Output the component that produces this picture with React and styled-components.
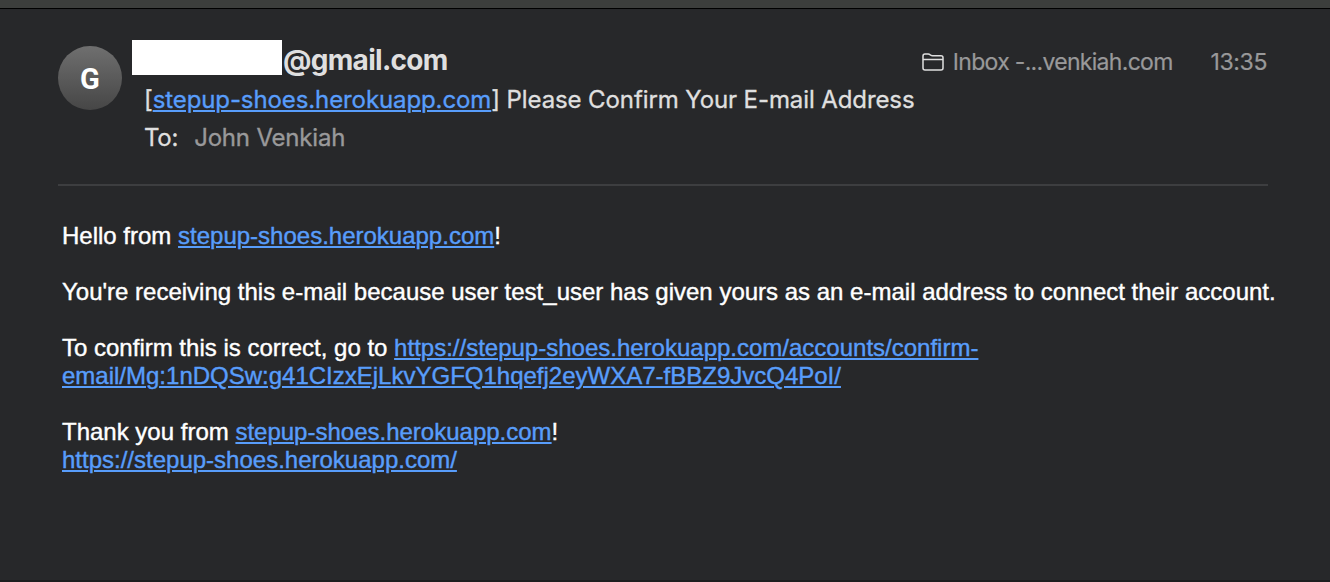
import React from 'react';
import styled, { createGlobalStyle } from 'styled-components';

const Global = createGlobalStyle`
  * { box-sizing: border-box; }
  body { margin: 0; background: #27282a; }
`;

const Window = styled.main`
  width: 1330px;
  height: 582px;
  overflow: hidden;
  background: #27282a;
  border-bottom: 2px solid #1d1e1f;
`;

const Toolbar = styled.div`
  height: 9px;
  background: #3c3e3c;
  border-bottom: 1px solid #000;
`;

const Header = styled.header`
  display: flex;
  margin: 0 62px 0 58px;
  padding-top: 31px;
  height: 177px;
  border-bottom: 2px solid #3d3e40;
  font-family: Inter, sans-serif;
`;

const Avatar = styled.div`
  flex: none;
  display: grid;
  place-items: center;
  width: 64px;
  height: 64px;
  margin-top: 6px;
  padding-top: 1px;
  border-radius: 50%;
  background: linear-gradient(#6f6f6f, #464646);
  color: #fff;
  font: 700 29px Roboto, sans-serif;
`;

const Details = styled.div`
  flex: 1;
  margin-left: 10px;
`;

const SenderRow = styled.div`
  display: flex;
  height: 42px;
`;

const Redaction = styled.div`
  width: 150px;
  height: 35px;
  background: #fff;
`;

const Tracked = styled.span`
  white-space: pre;
  letter-spacing: ${(p) => p.$track || 0}px;
`;

const Sender = styled.div`
  margin-left: 1px;
  line-height: 40px;
  font-size: 28px;
  font-weight: 650;
  color: #dfdfdf;
`;

const Meta = styled.div`
  display: flex;
  align-items: center;
  height: 44px;
  margin-left: auto;
  font-size: 23px;
  color: #99999a;
  -webkit-text-stroke: 0.2px currentColor;
`;

const Time = styled.div`
  margin: 0 1px 0 38px;
`;

const FolderIcon = styled.svg`
  width: 22px;
  height: 18px;
  margin-right: 9px;
`;

const HeaderLine = styled.div`
  margin-left: 12px;
  height: 38px;
  line-height: 36px;
  font-size: 24px;
  color: #dfdfdf;
  -webkit-text-stroke: 0.35px currentColor;
`;

const Recipient = styled.span`
  margin-left: 16px;
  color: #99999a;
`;

const Link = styled.a`
  color: #589dfb;
  text-decoration: underline;
  text-decoration-thickness: 2px;
  text-underline-offset: 2px;
`;

const Body = styled.article`
  padding: 36px 0 0 62px;
  font: 24px/28px "Liberation Sans", Arial, sans-serif;
  color: #fff;
  -webkit-text-stroke: 0.4px currentColor;
`;

const Paragraph = styled.p`
  margin: 0 0 28px;
  white-space: nowrap;
`;

export default function App() {
  return (
    <Window>
      <Global />
      <Toolbar />
      <Header>
        <Avatar>G</Avatar>
        <Details>
          <SenderRow>
            <Redaction />
            <Sender><Tracked $track={-0.7}>@gmail.com</Tracked></Sender>
            <Meta>
              <FolderIcon viewBox="0 0 22 18" fill="none" stroke="#dfdfdf" strokeWidth="1.5" strokeLinejoin="round">
                <path d="M1 15V3Q1 1 3 1H6.2Q7.2 1 7.9 1.6L8.7 2.2Q9.4 2.7 10.4 2.7H19Q21 2.7 21 4.7V15Q21 17 19 17H3Q1 17 1 15ZM1 6.6H21" />
              </FolderIcon>
              <Tracked $track={-0.7}>Inbox -...venkiah.com</Tracked>
              <Time><Tracked $track={-0.4}>13:35</Tracked></Time>
            </Meta>
          </SenderRow>
          <HeaderLine>
            <Tracked $track={-0.1}>[<Link>stepup-shoes.herokuapp.com</Link>] Please Confirm Your E-mail Address</Tracked>
          </HeaderLine>
          <HeaderLine>
            <Tracked $track={-0.25}>To:</Tracked><Recipient><Tracked $track={-0.2}>John Venkiah</Tracked></Recipient>
          </HeaderLine>
        </Details>
      </Header>
      <Body>
        <Paragraph>
          Hello from <Link>stepup-shoes.herokuapp.com</Link>!
        </Paragraph>
        <Paragraph>
          You're receiving this e-mail because user test_user has given yours as an e-mail address to connect their account.
        </Paragraph>
        <Paragraph>
          To confirm this is correct, go to <Link>https://stepup-shoes.herokuapp.com/accounts/confirm-<br />email/Mg:1nDQSw:g41CIzxEjLkvYGFQ1hqefj2eyWXA7-fBBZ9JvcQ4PoI/</Link>
        </Paragraph>
        <Paragraph>
          Thank you from <Link>stepup-shoes.herokuapp.com</Link>!<br />
          <Link>https://stepup-shoes.herokuapp.com/</Link>
        </Paragraph>
      </Body>
    </Window>
  );
}
